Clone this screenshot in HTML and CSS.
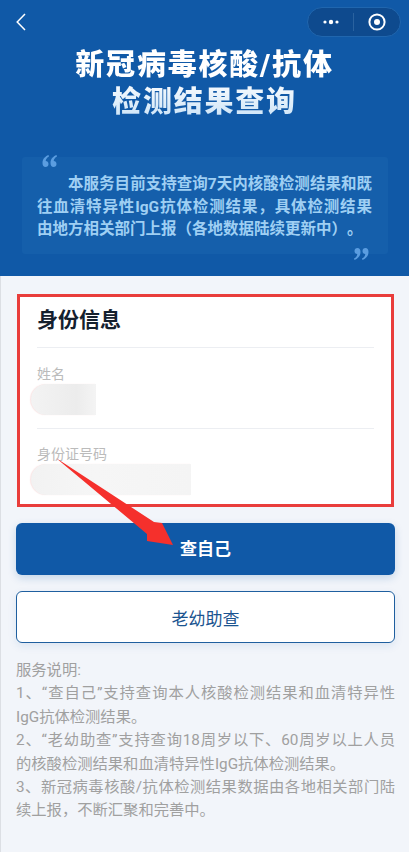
FILE: index.html
```html
<!DOCTYPE html>
<html>
<head>
    <meta charset="utf-8">
    <title>新冠病毒核酸/抗体检测结果查询</title>
    <link rel="stylesheet" href="styles.css">
</head>
<body>
    <div class="page">
        <div class="banner">
            <div class="nav">
                <svg class="back" width="10" height="18" viewBox="0 0 10 18"><path d="M9 1 1.2 9 9 17" fill="none" stroke="#fff" stroke-width="1.5"/></svg>
                <div class="capsule">
                    <div class="capsule-more">
                        <svg width="18" height="6" viewBox="0 0 18 6"><circle cx="3" cy="3" r="1.6" fill="#fff"/><circle cx="9" cy="3" r="2.2" fill="#fff"/><circle cx="15" cy="3" r="1.6" fill="#fff"/></svg>
                    </div>
                    <div class="capsule-close">
                        <svg width="18" height="18" viewBox="0 0 18 18"><circle cx="9" cy="9" r="7.6" fill="none" stroke="#fff" stroke-width="2"/><circle cx="9" cy="9" r="3" fill="#fff"/></svg>
                    </div>
                </div>
            </div>
            <h1 class="title">新冠病毒核酸/抗体<br>检测结果查询</h1>
            <div class="intro">
                <svg class="quote quote-open" width="15" height="12" viewBox="0 0 15 12"><path d="M6.500 0C3 1.500.5 4 .5 8c0 2.500 1.200 4 3 4s3-1.300 3-3-1.200-3-2.800-3C4 4 5 2.500 7 1.500zM14.500 0c-3.500 1.500-6 4-6 8 0 2.500 1.200 4 3 4s3-1.300 3-3-1.200-3-2.800-3c.3-2 1.300-3.500 3.300-4.500z" fill="#5b9de0"/></svg>
                <p>本服务目前支持查询7天内核酸检测结果和既往血清特异性IgG抗体检测结果，具体检测结果<span class="keep">由地</span>方相关部门上报（各地数据陆续更新中）。</p>
                <svg class="quote quote-close" width="15" height="12" viewBox="0 0 15 12"><path d="M8.500 12c3.500-1.500 6-4 6-8 0-2.500-1.200-4-3-4s-3 1.300-3 3 1.200 3 2.800 3c-.3 2-1.300 3.500-3.300 4.500zM.5 12c3.500-1.500 6-4 6-8 0-2.500-1.200-4-3-4s-3 1.300-3 3 1.200 3 2.800 3c-.3 2-1.300 3.500-3.300 4.500z" fill="#5b9de0"/></svg>
            </div>
        </div>

        <div class="content">
            <div class="card">
                <h2 class="card-title">身份信息</h2>
                <div class="field">
                    <div class="field-label">姓名</div>
                    <div class="smudge smudge-name"></div>
                </div>
                <div class="field">
                    <div class="field-label">身份证号码</div>
                    <div class="smudge smudge-id"></div>
                </div>
            </div>

            <button class="btn btn-primary">查自己</button>
            <button class="btn btn-outline">老幼助查</button>

            <div class="notes">
                <p>服务说明:</p>
                <p>1、“查自己”支持查询本人核酸检测结果和血清特异性IgG抗体检测结果。</p>
                <p>2、“老幼助查”支持查询18周岁以下、60周岁以上人员<span class="keep">的核</span>酸检测结果和血清特异性IgG抗体检测结果。</p>
                <p>3、新冠病毒核酸/抗体检测结果数据由各地相关部门陆续上报，不断汇聚和完善中。</p>
            </div>
        </div>

        <svg class="arrow" width="130" height="95" viewBox="0 0 130 95"><path d="M1 2 99 66 107 67 118 89 92 85 92 78Z" fill="#f5302c"/></svg>
    </div>
</body>
</html>
```

FILE: styles.css
```css
* {
    box-sizing: border-box;
}

body {
    margin: 0;
    background-color: #f2f5fa;
    font-family: Roboto, "Noto Sans CJK SC", sans-serif;
    text-spacing-trim: space-all;
}

.page {
    position: relative;
    height: 852px;
    overflow: hidden;
}

.keep {
    white-space: nowrap;
}

.banner {
    height: 276px;
    padding-top: 7px;
    background-color: #1059a7;
}

.nav {
    display: flex;
    justify-content: space-between;
    align-items: center;
    height: 30px;
    padding: 0 8px 0 16px;
}

.back {
    margin-top: -1px;
}

.capsule {
    display: flex;
    align-items: center;
    width: 94px;
    height: 30px;
    border: 1px solid #2066ae;
    border-radius: 15px;
    background-color: #0e4a8e;
}

.capsule-more,
.capsule-close {
    display: flex;
    justify-content: center;
    align-items: center;
    width: 47px;
    height: 18px;
}

.capsule-more {
    border-right: 1px solid #2a629f;
}

.title {
    margin: 10px 0 0;
    font-size: 29px;
    font-weight: 900;
    line-height: 37px;
    letter-spacing: 1.8px;
    text-align: center;
    color: transparent;
    background: linear-gradient(180deg, #ffffff 40%, #c9e2f7 100%);
    -webkit-background-clip: text;
    background-clip: text;
}

.intro {
    position: relative;
    height: 97px;
    margin: 36px 21px 0 22px;
    padding: 16px 16px 0 15px;
    background-color: #155fab;
    border-radius: 3px;
}

.intro p {
    margin: 0;
    font-size: 15.5px;
    font-weight: 700;
    line-height: 22.500px;
    text-indent: 31px;
    text-align: justify;
    color: #9fcff3;
}

.quote {
    position: absolute;
}

.quote-open {
    left: 20px;
    top: -2px;
}

.quote-close {
    right: 19px;
    top: 91px;
}

.content {
    min-height: 576px;
    padding: 18px 14px 0 15px;
    border-left: 1px solid #dcdfe4;
}

.card {
    height: 213px;
    margin: 0 1px;
    padding: 0 17px;
    background-color: #fff;
    border: 3px solid #e93d3b;
}

.card-title {
    height: 51px;
    margin: 0;
    border-bottom: 1px solid #eceef2;
    font-size: 21px;
    font-weight: 700;
    line-height: 47px;
    color: #14202e;
}

.field {
    height: 80px;
    padding-top: 16px;
}

.field + .field {
    border-top: 1px solid #eceef2;
    padding-top: 15px;
}

.field-label {
    font-size: 14px;
    line-height: 20px;
    color: #bbb;
}

.smudge {
    margin: 0 0 0 -6px;
    background-color: #efefef;
    border-radius: 16px 0 0 16px;
    box-shadow: -1px 0 1px rgba(240, 150, 150, 0.25);
}

.smudge-name {
    width: 65px;
    height: 31px;
    background-image: linear-gradient(90deg, #f3f3f3, #ececec 70%, #f4f4f4);
}

.smudge-id {
    width: 160px;
    height: 31px;
    background-image: linear-gradient(90deg, #f2f2f2, #f6f6f6 40%, #f4f4f4);
}

.btn {
    display: block;
    width: 379px;
    height: 52px;
    margin: 0;
    padding: 0;
    border-radius: 6px;
    font-family: inherit;
    font-size: 17px;
    cursor: pointer;
}

.btn-primary {
    margin-top: 16px;
    padding-bottom: 4px;
    border: none;
    background-color: #1059a7;
    color: #fff;
    font-weight: 700;
    box-shadow: 0 3px 8px rgba(16, 89, 167, 0.2);
}

.btn-outline {
    margin-top: 16px;
    border: 1px solid #1f5f9f;
    background-color: #fff;
    color: #1b5490;
    box-shadow: 0 3px 8px rgba(16, 89, 167, 0.1);
}

.notes {
    margin-top: 16px;
    font-size: 15.3px;
    line-height: 23.400px;
    text-align: justify;
    color: #a0a0a0;
}

.notes p {
    margin: 0;
}

.arrow {
    position: absolute;
    left: 55px;
    top: 456px;
}
```
